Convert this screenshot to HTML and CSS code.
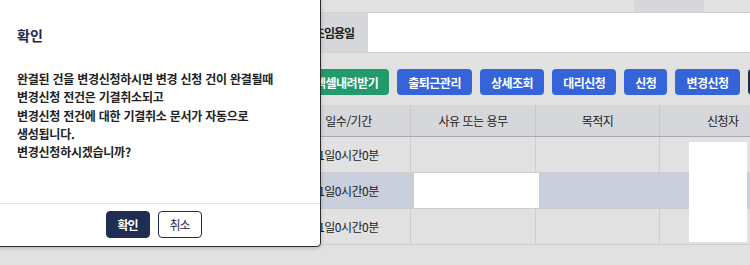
FILE: index.html
```html
<!DOCTYPE html>
<html lang="ko">
<head>
  <meta charset="UTF-8" />
  <meta name="viewport" content="width=device-width, initial-scale=1" />
  <title>근태 신청</title>
  <link rel="stylesheet" href="styles.css">
</head>
<body>
  <div class="page">
    <div class="info">
      <div class="info-row top">
        <div class="cell fill"></div>
        <div class="cell label short"></div>
        <div class="cell fill"></div>
      </div>
      <div class="info-row">
        <div class="cell blank"></div>
        <div class="cell label">최초임용일</div>
        <div class="cell value"></div>
      </div>
    </div>

    <div class="toolbar">
      <button class="btn green">엑셀내려받기</button>
      <button class="btn blue">출퇴근관리</button>
      <button class="btn blue">상세조회</button>
      <button class="btn blue">대리신청</button>
      <button class="btn blue">신청</button>
      <button class="btn blue">변경신청</button>
      <button class="btn navy">신청취소</button>
    </div>

    <div class="grid-wrap">
      <table class="grid">
        <colgroup>
          <col style="width:286px">
          <col style="width:124px">
          <col style="width:125px">
          <col style="width:124px">
          <col style="width:126px">
        </colgroup>
        <thead>
          <tr>
            <th>기간</th>
            <th>일수/기간</th>
            <th>사유 또는 용무</th>
            <th>목적지</th>
            <th>신청자</th>
          </tr>
        </thead>
        <tbody>
          <tr><td></td><td>1일0시간0분</td><td></td><td></td><td></td></tr>
          <tr class="selected"><td></td><td>1일0시간0분</td><td></td><td></td><td></td></tr>
          <tr><td></td><td>1일0시간0분</td><td></td><td></td><td></td></tr>
        </tbody>
      </table>
      <div class="mask mask-reason"></div>
      <div class="mask mask-name"></div>
    </div>
  </div>

  <div class="dialog">
    <h2 class="dialog-title">확인</h2>
    <div class="dialog-body">
      완결된 건을 변경신청하시면 변경 신청 건이 완결될때<br>
      변경신청 전건은 기결취소되고<br>
      변경신청 전건에 대한 기결취소 문서가 자동으로<br>
      생성됩니다.<br>
      변경신청하시겠습니까?
    </div>
    <div class="dialog-footer">
      <button class="dlg-btn primary">확인</button>
      <button class="dlg-btn outline">취소</button>
    </div>
  </div>
</body>
</html>
```

FILE: styles.css
```css
html, body {
  margin: 0;
  padding: 0;
  height: 100%;
  overflow: hidden;
}
body {
  font-family: "Noto Sans CJK KR", "Noto Sans", sans-serif;
  background: #e1e1e1;
  color: #222;
  position: relative;
}
.page {
  width: 785px;
}

/* info rows */
.info-row {
  display: flex;
  height: 39px;
  border-bottom: 1px solid #d2d2d2;
}
.info-row.top {
  height: 12px;
}
.cell {
  box-sizing: border-box;
}
.cell.fill {
  flex: 1;
}
.info-row.top .cell.fill:first-child {
  flex: 0 0 634px;
}
.cell.label {
  width: 118px;
  background: #d6d7db;
  font-size: 12px;
  font-weight: 700;
  line-height: 39px;
  text-align: right;
  padding-right: 14px;
  letter-spacing: -1px;
  white-space: nowrap;
  overflow: hidden;
}
.cell.label.short {
  width: 70px;
  padding: 0;
}
.cell.blank {
  width: 250px;
}
.cell.value {
  flex: 1;
  background: #fff;
}

/* buttons */
.toolbar {
  display: flex;
  gap: 8px;
  margin-top: 16px;
  padding-left: 304px;
  height: 26px;
}
.btn {
  flex: none;
  border: none;
  border-radius: 4px;
  color: #fff;
  font-family: "Noto Sans CJK KR", sans-serif;
  font-size: 12px;
  font-weight: 700;
  letter-spacing: -0.5px;
  padding: 0 11px;
  height: 26px;
  white-space: nowrap;
}
.btn.green {
  background: #229a6c;
}
.btn.blue {
  background: #3563d8;
}
.btn.navy {
  background: #1f2a44;
}

/* table */
.grid-wrap {
  position: relative;
  margin-top: 10px;
}
.grid {
  border-collapse: collapse;
  table-layout: fixed;
  width: 785px;
  font-size: 12px;
}
.grid th {
  background: #d6d7db;
  font-weight: 400;
  height: 31px;
  padding: 0;
  border-left: 1px solid #c8c8cc;
  border-bottom: 1px solid #a9aaae;
  letter-spacing: -0.5px;
}
.grid td {
  height: 35px;
  padding: 0;
  text-align: center;
  border-left: 1px solid #cdcdcd;
  border-bottom: 1px solid #cdcdcd;
  letter-spacing: -0.5px;
}
.grid tr.selected td {
  background: #c9cfdc;
}
.mask {
  position: absolute;
  background: #fff;
}
.mask-reason {
  left: 414px;
  top: 68px;
  width: 125px;
  height: 35px;
}
.mask-name {
  left: 689px;
  top: 37px;
  width: 58px;
  height: 100px;
}

/* dialog */
.dialog {
  position: absolute;
  left: -14px;
  top: -20px;
  width: 335px;
  height: 267px;
  box-sizing: border-box;
  background: #fff;
  border: 1px solid #2b2b2b;
  border-radius: 4px;
  box-shadow: 0 1px 4px rgba(0,0,0,0.2);
  display: flex;
  flex-direction: column;
}
.dialog-title {
  margin: 0;
  padding: 44px 0 0 30px;
  font-size: 14px;
  line-height: 20px;
  font-weight: 700;
  color: #1e2a4b;
}
.dialog-body {
  flex: 1;
  padding: 25px 0 0 30px;
  font-size: 12px;
  line-height: 18.3px;
  font-weight: 700;
  letter-spacing: -0.25px;
  color: #222;
}
.dialog-footer {
  height: 43px;
  border-top: 1px solid #e6e6e6;
  display: flex;
  justify-content: center;
  align-items: flex-start;
  gap: 8px;
  padding-top: 7px;
  box-sizing: border-box;
}
.dlg-btn {
  height: 27px;
  width: 44px;
  border-radius: 4px;
  font-family: "Noto Sans CJK KR", sans-serif;
  font-size: 12px;
  letter-spacing: -1px;
  padding: 0;
}
.dlg-btn.primary {
  background: #1f2d52;
  color: #fff;
  border: 1px solid #1f2d52;
  font-weight: 700;
}
.dlg-btn.outline {
  background: #fff;
  color: #1f2d52;
  border: 1px solid #1f2d52;
}
```
